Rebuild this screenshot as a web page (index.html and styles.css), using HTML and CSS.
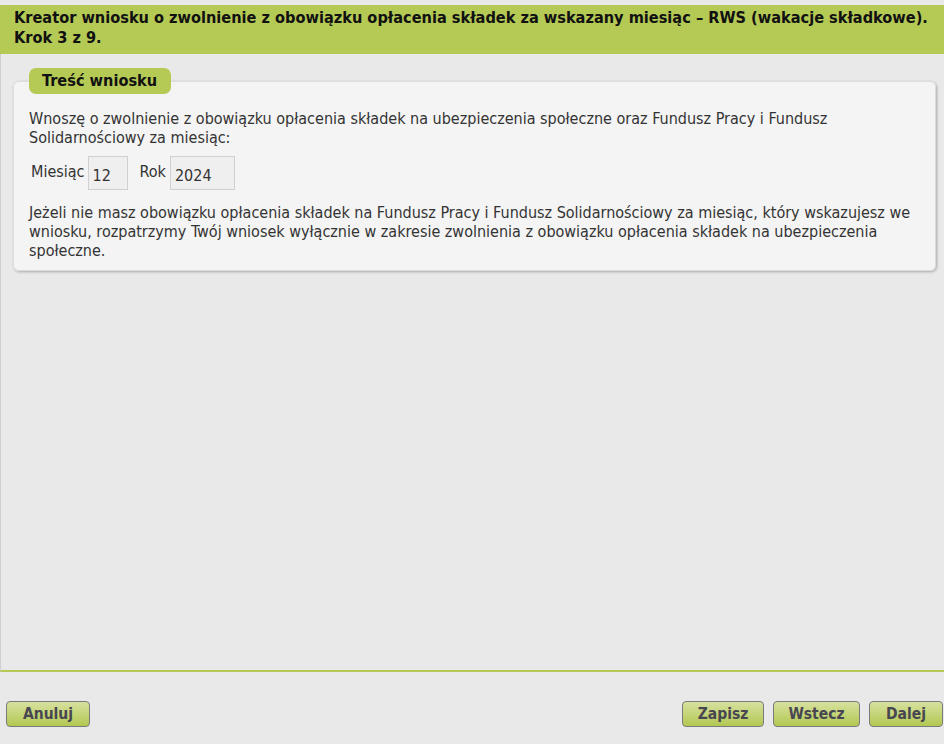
FILE: index.html
```html
<!DOCTYPE html>
<html lang="pl">
<head>
<meta charset="utf-8">
<title>Kreator wniosku RWS</title>
<link rel="stylesheet" href="styles.css">
</head>
<body>
<div class="page">
  <header class="header">
    <h1 class="title">Kreator wniosku o zwolnienie z obowiązku opłacenia składek za wskazany miesiąc – RWS (wakacje składkowe).<br>Krok 3 z 9.</h1>
  </header>
  <main class="main">
    <fieldset class="card">
      <legend class="legend">Treść wniosku</legend>
      <p class="para para-first">Wnoszę o zwolnienie z obowiązku opłacenia składek na ubezpieczenia społeczne oraz Fundusz Pracy i Fundusz Solidarnościowy za miesiąc:</p>
      <div class="fields">
        <label class="label">Miesiąc</label>
        <input class="input input-month" type="text" value="12" readonly>
        <label class="label label-year">Rok</label>
        <input class="input input-year" type="text" value="2024" readonly>
      </div>
      <p class="para">Jeżeli nie masz obowiązku opłacenia składek na Fundusz Pracy i Fundusz Solidarnościowy za miesiąc, który wskazujesz we wniosku, rozpatrzymy Twój wniosek wyłącznie w zakresie zwolnienia z obowiązku opłacenia składek na ubezpieczenia społeczne.</p>
    </fieldset>
  </main>
  <footer class="footer">
    <button class="btn btn-cancel" type="button">Anuluj</button>
    <div class="btn-group">
      <button class="btn btn-save" type="button">Zapisz</button>
      <button class="btn btn-back" type="button">Wstecz</button>
      <button class="btn btn-next" type="button">Dalej</button>
    </div>
  </footer>
</div>
</body>
</html>
```
FILE: styles.css
```css
html, body {
  margin: 0;
  padding: 0;
}
body {
  background: #e9e9e9;
  font-family: Tahoma, "DejaVu Sans Condensed", "DejaVu Sans", sans-serif;
  font-size: 16px;
  color: #333;
}
.page {
  width: 944px;
  height: 744px;
  padding-top: 5px;
  box-sizing: border-box;
  display: flex;
  flex-direction: column;
}
.header {
  background: #b5c955;
  height: 49px;
  box-sizing: border-box;
  padding: 3px 8px 0 14px;
  overflow: hidden;
}
.title {
  margin: 0;
  font-size: 16.2px;
  font-weight: bold;
  line-height: 20px;
  color: #111;
  white-space: nowrap;
}
.main {
  height: 618px;
  box-sizing: border-box;
  border-left: 1px solid #cfcfcf;
  border-bottom: 2px solid #b5c955;
  padding: 14px 8px 0 12px;
}
.card {
  margin: 0;
  padding: 0 15px 10px 15px;
  background: #f4f4f4;
  border: 1px solid #dcdcdc;
  border-radius: 6px;
  box-shadow: 1px 1px 3px rgba(0, 0, 0, 0.28);
  min-width: 0;
}
.legend {
  background: #b5c955;
  border-radius: 7px;
  padding: 0 13px;
  height: 26px;
  line-height: 26px;
  font-weight: bold;
  color: #111;
  font-size: 16.2px;
  width: 116px;
  box-sizing: content-box;
}
.para {
  margin: 0;
  line-height: 19px;
}
.para-first {
  margin-top: 15px;
}
.fields {
  display: flex;
  align-items: center;
  margin: 9px 0 13px 2px;
  height: 34px;
}
.label {
  line-height: 19px;
  margin-top: -4px;
}
.label-year {
  margin-left: 12px;
}
.input {
  font: inherit;
  color: #333;
  height: 34px;
  box-sizing: border-box;
  background: #efefef;
  border: 1px solid #d0d0d0;
  padding: 5px 0 0 4px;
  margin-left: 3px;
  outline: none;
}
.input-month {
  width: 40px;
}
.input-year {
  margin-left: 4px;
  width: 65px;
}
.footer {
  display: flex;
  justify-content: space-between;
  align-items: flex-start;
  padding: 29px 1px 0 6px;
}
.btn-group {
  display: flex;
  gap: 9px;
}
.btn {
  font-family: Tahoma, "DejaVu Sans Condensed", "DejaVu Sans", sans-serif;
  font-size: 15.5px;
  font-weight: bold;
  color: #484650;
  height: 26px;
  padding: 0;
  border: 1px solid #7a7a7a;
  border-radius: 4px;
  background: linear-gradient(#d6e19f, #b3c852);
  cursor: pointer;
}
.btn-cancel { width: 84px; }
.btn-save { width: 82px; }
.btn-back { width: 87px; }
.btn-next { width: 74px; }
```
